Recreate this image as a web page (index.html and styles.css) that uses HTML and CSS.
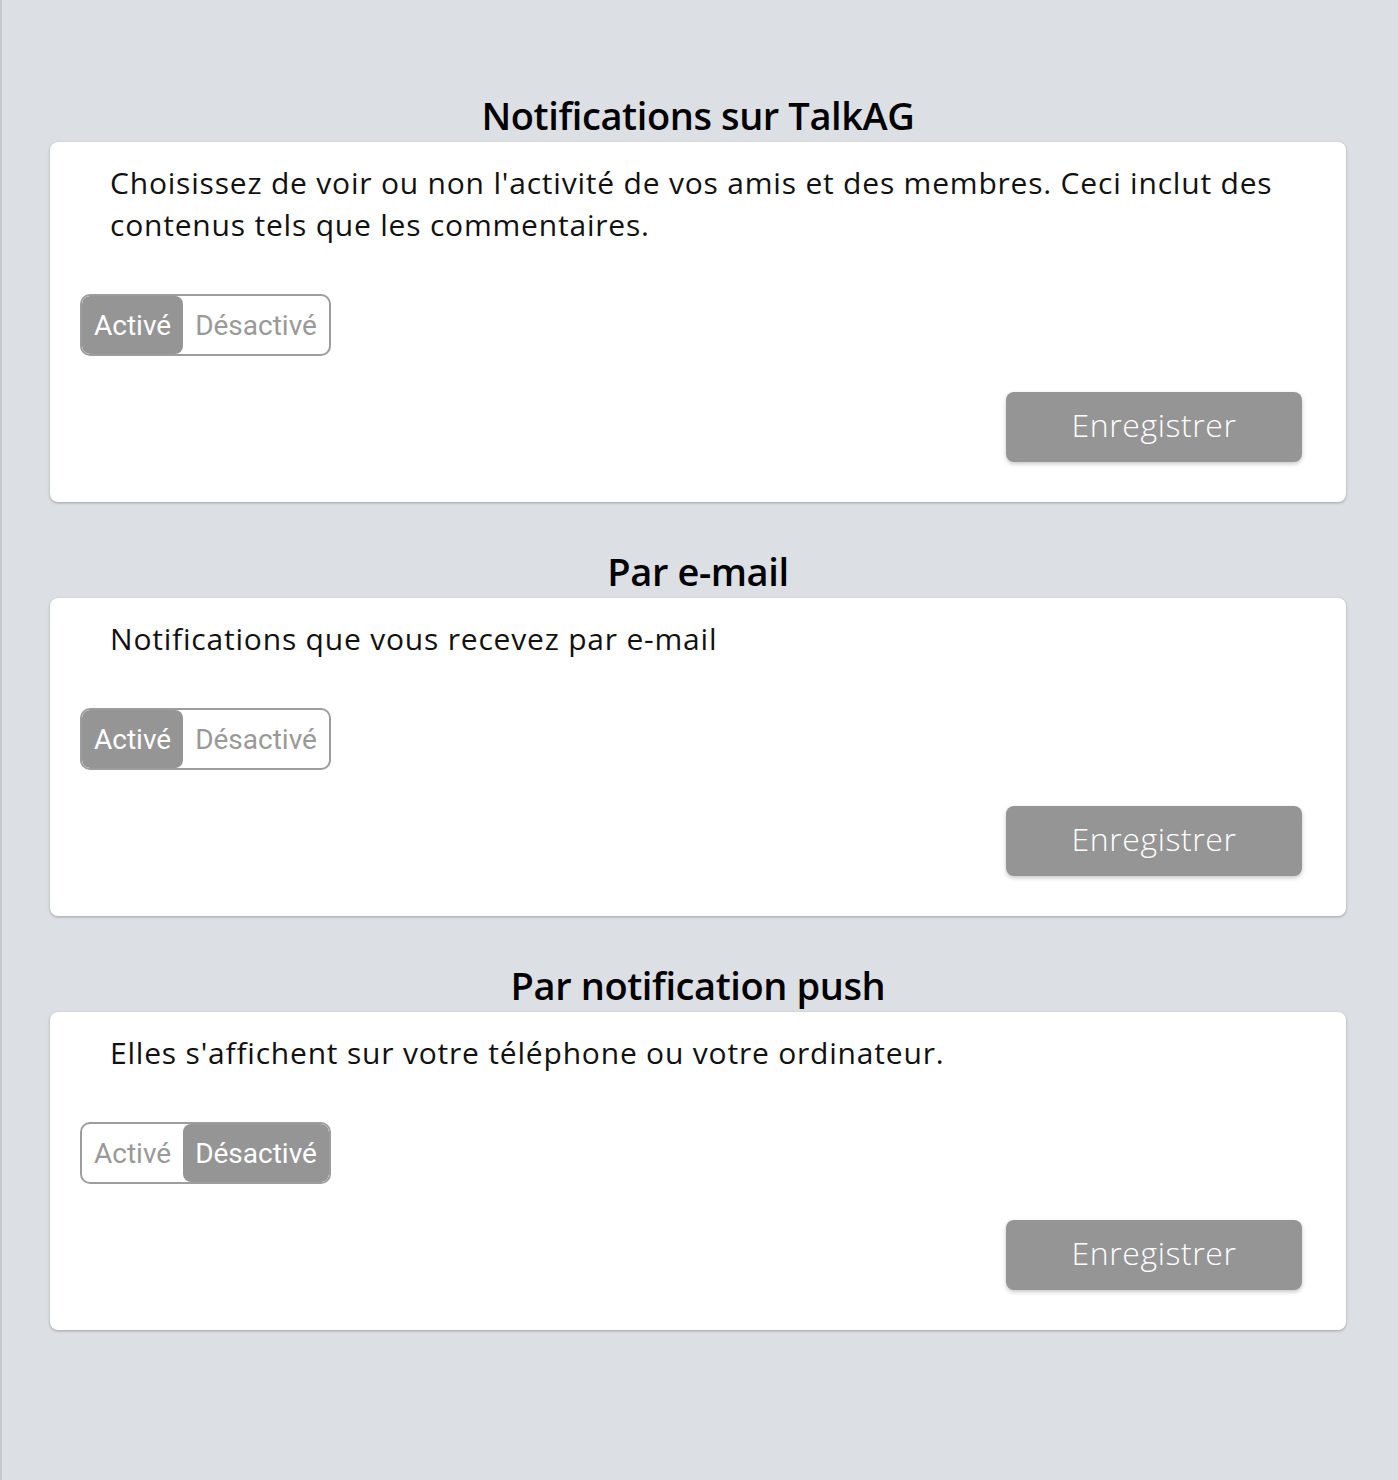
FILE: index.html
```html
<!DOCTYPE html>
<html lang="fr">
<head>
<meta charset="utf-8">
<title>Notifications</title>
<link rel="stylesheet" href="styles.css">
</head>
<body>
<main class="page">
  <section class="group">
    <h2 class="group-title">Notifications sur TalkAG</h2>
    <div class="card">
      <p class="card-text">Choisissez de voir ou non l'activité de vos amis et des membres. Ceci inclut des contenus tels que les commentaires.</p>
      <div class="toggle">
        <span class="seg seg-on">Activé</span>
        <span class="seg">Désactivé</span>
      </div>
      <div class="actions"><button class="save">Enregistrer</button></div>
    </div>
  </section>
  <section class="group">
    <h2 class="group-title">Par e-mail</h2>
    <div class="card">
      <p class="card-text">Notifications que vous recevez par e-mail</p>
      <div class="toggle">
        <span class="seg seg-on">Activé</span>
        <span class="seg">Désactivé</span>
      </div>
      <div class="actions"><button class="save">Enregistrer</button></div>
    </div>
  </section>
  <section class="group">
    <h2 class="group-title">Par notification push</h2>
    <div class="card">
      <p class="card-text">Elles s'affichent sur votre téléphone ou votre ordinateur.</p>
      <div class="toggle">
        <span class="seg">Activé</span>
        <span class="seg seg-on">Désactivé</span>
      </div>
      <div class="actions"><button class="save">Enregistrer</button></div>
    </div>
  </section>
</main>
</body>
</html>
```

FILE: styles.css
```css
html, body {
  margin: 0;
  padding: 0;
}
body {
  background: #dcdfe3;
  min-height: 1480px;
  border-left: 2px solid #c5c9cf;
  box-sizing: border-box;
  font-family: "Open Sans", "Noto Sans", sans-serif;
  color: #111;
}
.page {
  padding: 94px 52px 0 48px;
}
.group + .group {
  margin-top: 48px;
}
.group-title {
  margin: 0;
  height: 48px;
  line-height: 42px;
  text-align: center;
  font-size: 38px;
  font-weight: 600;
  color: #000;
  letter-spacing: -0.4px;
}
.card {
  background: #fff;
  border-radius: 8px;
  box-shadow: 0 1px 3px rgba(0, 0, 0, 0.28);
  padding: 20px 44px 40px 30px;
}
.card-text {
  margin: 0 0 48px 30px;
  font-size: 30px;
  line-height: 42px;
  font-weight: 400;
  letter-spacing: 0.8px;
  color: #111;
}
.toggle {
  display: inline-flex;
  box-sizing: border-box;
  height: 62px;
  border: 2px solid #9d9d9d;
  border-radius: 10px;
  overflow: hidden;
  font-family: Roboto, "Liberation Sans", sans-serif;
  font-size: 28px;
}
.seg {
  display: flex;
  align-items: center;
  padding: 0 12px;
  color: #999;
}
.seg-on {
  background: #959595;
  color: #fff;
  border-radius: 8px;
}
.actions {
  display: flex;
  justify-content: flex-end;
  margin-top: 36px;
}
.save {
  width: 296px;
  height: 70px;
  padding: 0 0 6px;
  border: none;
  border-radius: 8px;
  background: #959595;
  color: #fff;
  font-family: "Open Sans", "Noto Sans", sans-serif;
  font-size: 32px;
  font-weight: 300;
  letter-spacing: 0.6px;
  box-shadow: 0 2px 4px rgba(0, 0, 0, 0.22);
  cursor: pointer;
}
```
